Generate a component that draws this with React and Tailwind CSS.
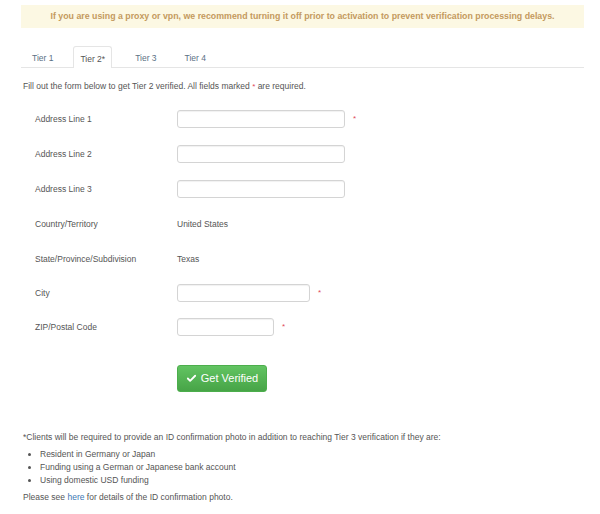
import { Check } from 'lucide-react';

const FONT = { fontFamily: '"Liberation Sans", Arial, sans-serif' };

function Req() {
  return <span className="text-[#e0475b] text-[8px] leading-none">*</span>;
}

function Field({ label, width, required, value, h = 'h-[35px]' }) {
  return (
    <div className={`flex items-center ${h}`}>
      <div className="w-[156px] pl-[14px] text-[#555]">{label}</div>
      {value ? (
        <div className="text-[#555]">{value}</div>
      ) : (
        <div className="flex items-center gap-[8px]">
          <input
            className={`${width} h-[18px] rounded-[3px] border border-[#d4d4d4] bg-white shadow-[inset_0_1px_1px_rgba(0,0,0,0.06)] outline-none`}
          />
          {required && <Req />}
        </div>
      )}
    </div>
  );
}

export default function App() {
  return (
    <div className="bg-white w-[600px] h-[514px] pt-[5px] pl-[21px] pr-[16px] text-[8.5px] text-[#555]" style={FONT}>
      {/* Alert */}
      <div className="h-[23px] bg-[#fcf8e3] flex items-center justify-center font-bold text-[8.8px] text-[#c49a5e]">
        If you are using a proxy or vpn, we recommend turning it off prior to activation to prevent verification processing delays.
      </div>

      {/* Tabs */}
      <div className="mt-[18px] flex border-b border-[#e5e5e5] pl-[2px] h-[22px]">
        <div className="px-[9px] pt-[6px] text-[#5b7185]">Tier 1</div>
        <div className="ml-[11px] px-[6px] pt-[6px] border border-b-0 border-[#e5e5e5] rounded-t-[3px] bg-white -mb-px text-[#555]">Tier 2*</div>
        <div className="ml-[14px] px-[9px] pt-[6px] text-[#5b7185]">Tier 3</div>
        <div className="ml-[10px] px-[9px] pt-[6px] text-[#5b7185]">Tier 4</div>
      </div>

      <p className="mt-[12px] pl-[2px]">
        Fill out the form below to get Tier 2 verified. All fields marked <Req /> are required.
      </p>

      {/* Form */}
      <div className="mt-[9px]">
        <Field label="Address Line 1" width="w-[168px]" required />
        <Field label="Address Line 2" width="w-[168px]" />
        <Field label="Address Line 3" width="w-[168px]" />
        <Field label="Country/Territory" value="United States" />
        <Field label="State/Province/Subdivision" value="Texas" />
        <Field label="City" width="w-[133px]" required h="h-[33px]" />
        <Field label="ZIP/Postal Code" width="w-[97px]" required />
        <div className="mt-[20px] pl-[156px]">
          <button className="h-[27px] w-[90px] rounded-[3px] border border-[#4cae4c] bg-gradient-to-b from-[#62c462] to-[#47a447] text-white text-[11px] flex items-center justify-center gap-[4px]">
            <Check className="w-[11px] h-[11px]" strokeWidth={4} />
            Get Verified
          </button>
        </div>
      </div>

      {/* Footer notes */}
      <div className="mt-[39px] pl-[2px]">
        <p>*Clients will be required to provide an ID confirmation photo in addition to reaching Tier 3 verification if they are:</p>
        <ul className="mt-[4px] pl-[17px] list-disc leading-[13px]">
          <li>Resident in Germany or Japan</li>
          <li>Funding using a German or Japanese bank account</li>
          <li>Using domestic USD funding</li>
        </ul>
        <p className="mt-[4px]">
          Please see <a className="text-[#3c78b4]">here</a> for details of the ID confirmation photo.
        </p>
      </div>
    </div>
  );
}
